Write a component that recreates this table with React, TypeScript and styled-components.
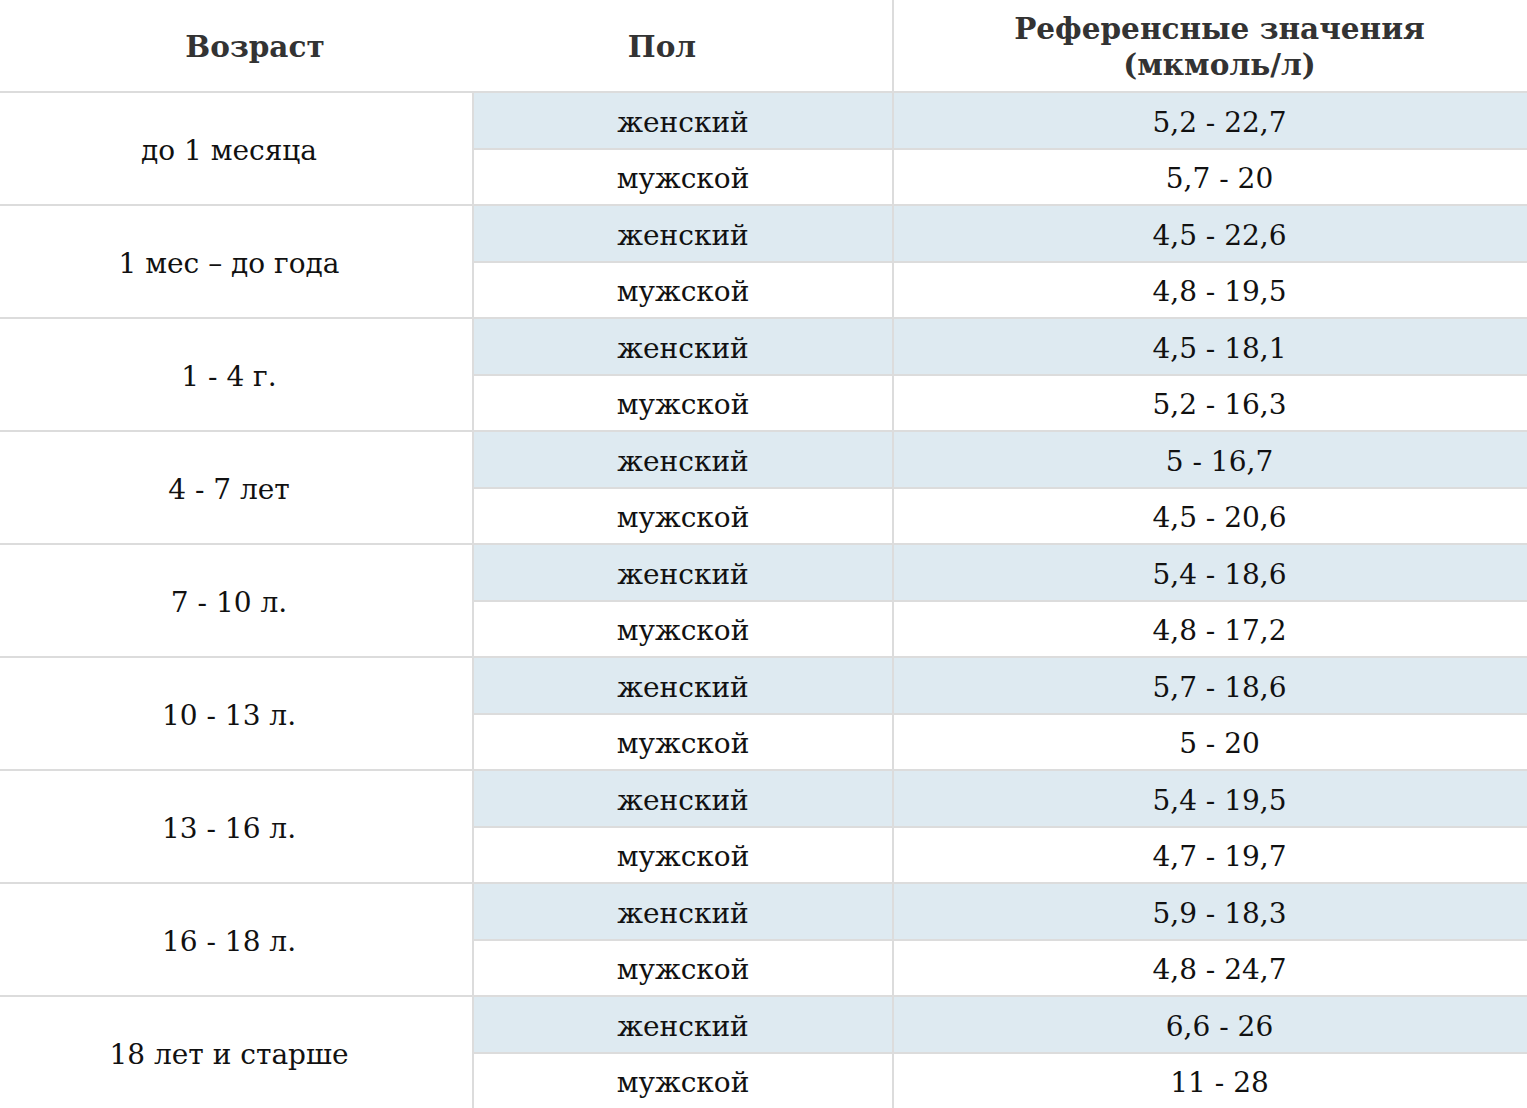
import React from "react";
import styled, { createGlobalStyle } from "styled-components";

const Global = createGlobalStyle`
  html, body { margin: 0; padding: 0; background: #fff; }
  body { font-family: "DejaVu Serif", "Liberation Serif", serif; }
`;

const Table = styled.div`
  display: grid;
  grid-template-columns: 474px 420px 633px;
  width: 1527px;
  color: #111;
`;

const HeadCell = styled.div<{ $shift: number; $divider?: boolean }>`
  height: 93px;
  box-sizing: border-box;
  border-bottom: 2px solid #dcdcdc;
  ${(p) => (p.$divider ? "border-right: 2px solid #dcdcdc;" : "")}
  display: flex;
  align-items: center;
  justify-content: center;
  text-align: center;
  padding-top: 3px;
  padding-left: ${(p) => (p.$shift > 0 ? p.$shift * 2 : 0)}px;
  padding-right: ${(p) => (p.$shift < 0 ? -p.$shift * 2 : 0)}px;
  font-weight: bold;
  font-size: 29.5px;
  line-height: 36px;
  color: #333;
`;

const AgeCell = styled.div`
  grid-row: span 2;
  height: 113px;
  box-sizing: border-box;
  border-bottom: 2px solid #dcdcdc;
  border-right: 2px solid #dcdcdc;
  display: flex;
  align-items: center;
  justify-content: center;
  padding-top: 3px;
  padding-right: 14px;
  font-size: 28px;
`;

const Cell = styled.div<{ $shaded: boolean; $divider?: boolean; $shift?: number; $col?: number }>`
  height: 56.5px;
  box-sizing: border-box;
  background: ${(p) => (p.$shaded ? "#deeaf1" : "#fff")};
  border-bottom: 2px solid #dcdcdc;
  ${(p) => (p.$divider ? "border-right: 2px solid #dcdcdc;" : "")}
  ${(p) => (p.$col ? `grid-column: ${p.$col};` : "")}
  display: flex;
  align-items: center;
  justify-content: center;
  padding-top: 4px;
  padding-left: ${(p) => (p.$shift ? p.$shift * 2 : 0)}px;
  font-size: 28px;
`;

const data: [string, string, string][] = [
  ["до 1 месяца", "5,2 - 22,7", "5,7 - 20"],
  ["1 мес – до года", "4,5 - 22,6", "4,8 - 19,5"],
  ["1 - 4 г.", "4,5 - 18,1", "5,2 - 16,3"],
  ["4 - 7 лет", "5 - 16,7", "4,5 - 20,6"],
  ["7 - 10 л.", "5,4 - 18,6", "4,8 - 17,2"],
  ["10 - 13 л.", "5,7 - 18,6", "5 - 20"],
  ["13 - 16 л.", "5,4 - 19,5", "4,7 - 19,7"],
  ["16 - 18 л.", "5,9 - 18,3", "4,8 - 24,7"],
  ["18 лет и старше", "6,6 - 26", "11 - 28"],
];

export default function App() {
  return (
    <>
      <Global />
      <Table>
        <HeadCell $shift={18}>Возраст</HeadCell>
        <HeadCell $shift={-21} $divider>
          Пол
        </HeadCell>
        <HeadCell $shift={9}>
          Референсные значения
          <br />
          (мкмоль/л)
        </HeadCell>
        {data.map(([age, f, m]) => (
          <React.Fragment key={age}>
            <AgeCell>{age}</AgeCell>
            <Cell $shaded $divider>
              женский
            </Cell>
            <Cell $shaded $shift={9}>
              {f}
            </Cell>
            <Cell $shaded={false} $divider $col={2}>
              мужской
            </Cell>
            <Cell $shaded={false} $shift={9}>
              {m}
            </Cell>
          </React.Fragment>
        ))}
      </Table>
    </>
  );
}
